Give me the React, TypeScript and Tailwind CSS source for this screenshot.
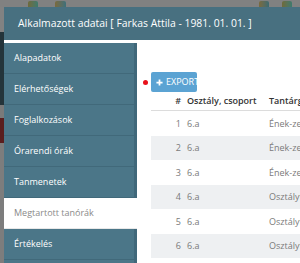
import React from "react";

const items = [
  "Alapadatok",
  "Elérhetőségek",
  "Foglalkozások",
  "Órarendi órák",
  "Tanmenetek",
  "Megtartott tanórák",
  "Értékelés",
];

const rows = [
  ["1", "6.a", "Ének-zene"],
  ["2", "6.a", "Ének-zene"],
  ["3", "6.a", "Ének-zene"],
  ["4", "6.a", "Osztályfőnöki"],
  ["5", "6.a", "Osztályfőnöki"],
  ["6", "6.a", "Osztályfőnöki"],
];

export default function App() {
  return (
    <div
      className="w-[300px] h-[263px] overflow-hidden flex flex-col bg-[#7c7c7c]"
      style={{ fontFamily: '"Open Sans", "Noto Sans", sans-serif' }}
    >
      {/* backdrop top strip */}
      <div className="h-[7px] shrink-0 bg-[#818181] flex items-end">
        <div className="w-[28px]" />
        <div className="w-[10px] h-[6px] bg-gradient-to-r from-[#6f6a3a] to-[#3c7a6e] rounded-t-[2px]" />
        <div className="w-[17px]" />
        <div className="w-[11px] h-[6px] bg-gradient-to-r from-[#7a6a3c] to-[#3c6f7a] rounded-t-[2px]" />
        <div className="flex-1" />
        <div className="w-[10px] h-[6px] bg-gradient-to-r from-[#7a6a3c] to-[#3a6a70] rounded-t-[2px]" />
        <div className="w-[13px]" />
        <div className="w-[10px] h-[6px] bg-gradient-to-r from-[#6f6a3a] to-[#3c7a6e] rounded-t-[2px]" />
        <div className="w-[8px]" />
      </div>
      <div className="flex flex-1 min-h-0">
        {/* backdrop left strip */}
        <div className="w-[4px] shrink-0 flex flex-col">
          <div className="h-[25px] bg-[#828282]" />
          <div className="h-[73px] bg-[#24343a]" />
          <div className="h-[13px] bg-[#7a7a7a]" />
          <div className="h-[25px] bg-[#5a1e1e]" />
          <div className="flex-1 bg-[#7d7d7d]" />
        </div>
        {/* modal */}
        <div className="flex-1 min-w-0 flex flex-col bg-white">
          <div className="h-[33px] shrink-0 bg-[#487080] flex items-center pl-[14px] text-white text-[10.4px] whitespace-nowrap">
            Alkalmazott adatai [ Farkas Attila - 1981. 01. 01. ]
          </div>
          <div className="flex flex-1 min-h-0 pt-[3px]">
            {/* sidebar */}
            <div className="w-[133px] shrink-0 flex flex-col">
              {items.map((it, i) => {
                const active = i === 5;
                return (
                  <div
                    key={it}
                    className={
                      active
                        ? "h-[31px] shrink-0 flex items-center pl-[10px] bg-white text-[#8a8a8a] text-[9px] border-b border-[#e8e8e8]"
                        : "h-[31px] shrink-0 flex items-center pl-[10px] bg-[#4b7688] text-white text-[9px] border-b border-[#41697a] border-r-[3px] border-r-[#40687a]"
                    }
                  >
                    {it}
                  </div>
                );
              })}
              <div className="flex-1 bg-[#4b7688] border-r-[3px] border-r-[#40687a]" />
            </div>
            {/* content */}
            <div className="flex-1 min-w-0 flex flex-col pt-[29px] overflow-hidden">
              <div className="flex items-center pl-[6px]">
                <div className="w-[5px] h-[5px] shrink-0 rounded-full bg-[#e8101a]" />
                <div className="w-[3px] shrink-0" />
                <div className="w-[46px] h-[20px] shrink-0 bg-[#5ba3d3] rounded-[2px] flex items-center pl-[5px] gap-[3px] text-white text-[9px]">
                  <svg width="7" height="7" viewBox="0 0 8 8" className="shrink-0">
                    <path d="M4 0.5v7M0.5 4h7" stroke="white" strokeWidth="2" />
                  </svg>
                  <span>EXPORT</span>
                </div>
              </div>
              <div className="pl-[14px] flex flex-col">
                <div className="h-[19px] border-b border-[#dcdcdc] flex items-center text-[9px] font-semibold text-[#333] whitespace-nowrap">
                  <div className="w-[30px] shrink-0 text-right">#</div>
                  <div className="w-[6px] shrink-0" />
                  <div className="w-[76px] shrink-0">Osztály, csoport</div>
                  <div className="w-[6px] shrink-0" />
                  <div className="shrink-0">Tantárgy</div>
                </div>
                {rows.map((r, i) => (
                  <div
                    key={i}
                    className={
                      (i % 2 === 1 ? "bg-[#eef0f2] " : "bg-white ") +
                      "h-[24.5px] flex items-center text-[9px] text-[#7a7a7a] whitespace-nowrap"
                    }
                  >
                    <div className="w-[30px] shrink-0 text-right">{r[0]}</div>
                    <div className="w-[6px] shrink-0" />
                    <div className="w-[76px] shrink-0">{r[1]}</div>
                    <div className="w-[6px] shrink-0" />
                    <div className="shrink-0">{r[2]}</div>
                  </div>
                ))}
              </div>
            </div>
          </div>
        </div>
      </div>
    </div>
  );
}
